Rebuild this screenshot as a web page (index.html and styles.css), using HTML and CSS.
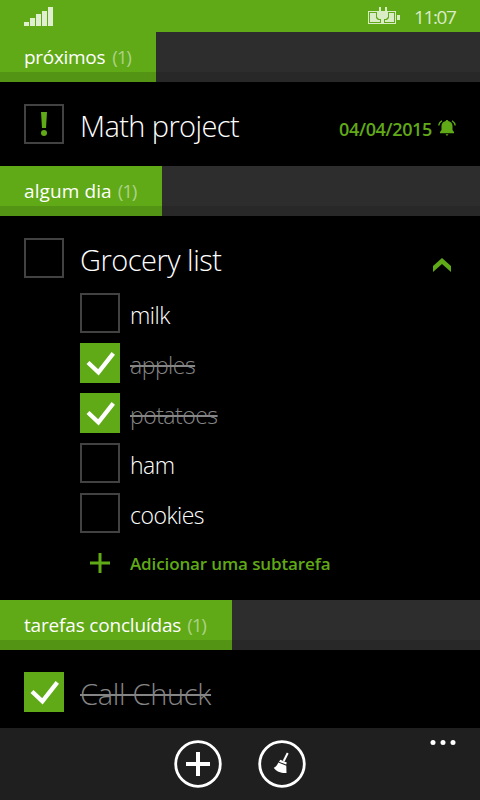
FILE: index.html
```html
<!DOCTYPE html>
<html lang="pt">
<head>
<meta charset="utf-8">
<title>Tarefas</title>
<link rel="stylesheet" href="styles.css">
</head>
<body>
<svg class="defs" aria-hidden="true">
  <symbol id="check" viewBox="0 0 40 40"><path d="M8 19.500 18.400 29.300 33.300 10.300" fill="none" stroke="#fff" stroke-width="4.300"/></symbol>
</svg>
<header class="status">
  <svg class="signal" width="30" height="20" viewBox="0 0 30 20"><path d="M0 15h5v4H0zM6 11h5v8H6zM12 7h5v12h-5zM18 4h5v15h-5zM24 0h5v19h-5z" fill="#dfefcf"/></svg>
  <svg class="battery" width="33" height="18" viewBox="0 0 33 18"><g fill="#d9ecc5"><path d="M0 4h9v1H1v11h12v1H0zM20 4h8v13H16v-1h11V5h-7zM29 8h3v5h-3z"/><path d="M2 6h6v5l2 2h2v2H2zM21 6h5v9h-9v-2h2l2-2zM11 0h2v4h4V0h2v4h1v6l-2 2h-2v5h-3v-5h-2l-2-2V4h2z"/></g></svg>
  <span class="clock">11:07</span>
</header>
<main>
  <section>
    <div class="group"><h2 class="tab upcoming"><span class="name">próximos</span><span class="count">(1)</span></h2></div>
    <div class="task">
      <span class="box"><svg width="36" height="36" viewBox="0 0 36 36"><path d="M15 6h6l-1 16h-4z" fill="#60a917"/><circle cx="18" cy="27" r="3" fill="#60a917"/></svg></span>
      <span class="title math">Math project</span>
      <span class="date">04/04/2015</span>
      <svg class="bell" width="18" height="18" viewBox="0 0 18 18"><path d="M9 1c.8 0 1.200.5 1.300 1.100C13 2.700 14.500 4.500 14.500 7v4l1.500 2v1.300H2V13L3.500 11V7c0-2.500 1.500-4.300 4.200-4.900C7.800 1.500 8.200 1 9 1zM7.500 15.200h3L9 17z" fill="#60a917"/><path d="M4 1.700Q1 3.500.8 6.500M14 1.700Q17 3.500 17.200 6.500" fill="none" stroke="#60a917" stroke-width="1.300"/></svg>
    </div>
  </section>
  <section>
    <div class="group"><h2 class="tab someday"><span class="name">algum dia</span><span class="count">(1)</span></h2></div>
    <div class="list">
      <div class="parent">
        <span class="box"></span>
        <span class="title grocery">Grocery list</span>
        <svg class="chevron" width="18" height="14" viewBox="0 0 18 14"><path d="M9 0 18 8v6L9 6 0 14V8z" fill="#60a917"/></svg>
      </div>
      <ul class="subtasks">
        <li><span class="box"></span><span class="sub milk">milk</span></li>
        <li><span class="box done"><svg width="40" height="40"><use href="#check"/></svg></span><span class="sub struck apples">apples</span></li>
        <li><span class="box done"><svg width="40" height="40"><use href="#check"/></svg></span><span class="sub struck potatoes">potatoes</span></li>
        <li><span class="box"></span><span class="sub ham">ham</span></li>
        <li><span class="box"></span><span class="sub cookies">cookies</span></li>
      </ul>
      <div class="add">
        <svg width="40" height="20" viewBox="0 0 40 20"><path d="M10 10h20M20 0v20" stroke="#60a917" stroke-width="3"/></svg>
        <span class="addlabel">Adicionar uma subtarefa</span>
      </div>
    </div>
  </section>
  <section>
    <div class="group"><h2 class="tab completed"><span class="name">tarefas concluídas</span><span class="count">(1)</span></h2></div>
    <div class="task last">
      <span class="box done"><svg width="40" height="40"><use href="#check"/></svg></span>
      <span class="title struck call">Call Chuck</span>
    </div>
  </section>
</main>
<footer class="appbar">
  <svg width="48" height="48" viewBox="0 0 48 48"><circle cx="24" cy="24" r="22.300" fill="none" stroke="#fff" stroke-width="2.800"/><path d="M12 24h24M24 12v24" stroke="#fff" stroke-width="4"/></svg>
  <svg width="48" height="48" viewBox="0 0 48 48"><circle cx="24" cy="24" r="22.300" fill="none" stroke="#fff" stroke-width="2.800"/><path d="m29.700 13-4 8" stroke="#fff" stroke-width="2"/><path d="m22.300 19.800 6.500 2.800-.6 2-7.200-2.900zM20.300 22.500l8 3.300.2 7.200c-5 .4-10.500-1.500-12.700-5.300 2-.8 3.600-2.500 4.500-5.200z" fill="#fff"/></svg>
  <svg class="more" width="26" height="6" viewBox="0 0 26 6"><g fill="#fff"><circle cx="3" cy="2.500" r="2.500"/><circle cx="13" cy="2.500" r="2.500"/><circle cx="23" cy="2.500" r="2.500"/></g></svg>
</footer>
</body>
</html>
```
FILE: styles.css
```css
* { box-sizing: border-box; }
body { margin: 0; width: 480px; height: 800px; overflow: hidden; background: #000; color: #fff; font-family: "Open Sans", "Noto Sans", sans-serif; display: flex; flex-direction: column; }
svg { display: block; flex: none; }
.defs { position: absolute; width: 0; height: 0; }
.status { height: 32px; background: #60a917; display: flex; align-items: flex-start; padding: 7px 24px 0; }
.battery { margin-left: auto; }
.clock { width: 42px; margin-left: 13px; font-size: 19px; line-height: 20px; font-weight: 400; letter-spacing: -1.400px; color: #daebc8; white-space: nowrap; }
.group { height: 50px; background: linear-gradient(#2d2d2d 40px, #282828 40px); }
.tab { margin: 0; height: 50px; padding: 0 0 0 24px; display: flex; align-items: center; gap: 7px; font-size: 19px; font-weight: 400; line-height: 50px; background: linear-gradient(#60a917 40px, #549415 40px); white-space: nowrap; letter-spacing: -.3px; }
.upcoming { width: 156px; }
.someday { width: 162px; gap: 6px; letter-spacing: .1px; }
.completed { width: 232px; gap: 6px; letter-spacing: -.180px; }
.count { color: #acd285; font-weight: 400; letter-spacing: -1.200px; }
.box { width: 40px; height: 40px; border: 2px solid #424242; flex: none; }
.done { border: 0; background: #60a917; }
.task { height: 84px; padding: 0 24px; display: flex; align-items: center; }
.last { height: 78px; padding-top: 6px; }
.title { margin-left: 16px; padding-top: 3px; font-size: 29px; line-height: 40px; font-weight: 300; letter-spacing: -.6px; white-space: nowrap; }
.grocery { padding-top: 2px; letter-spacing: -.500px; }
.call { letter-spacing: -.300px; text-underline-offset: 0; }
.date { margin-left: auto; padding-top: 9px; font-size: 18px; line-height: 24px; font-weight: 600; color: #60a917; letter-spacing: -.350px; }
.bell { margin: 8px 0 0 6px; }
.list { height: 384px; padding: 22px 24px 0; }
.parent { display: flex; height: 40px; }
.chevron { margin: 20px 5px 0 auto; }
.subtasks { list-style: none; margin: 15px 0 0 56px; padding: 0; display: grid; gap: 10px; }
.subtasks li { display: flex; height: 40px; }
.sub { margin-left: 10px; font-size: 23px; line-height: 44px; font-weight: 300; letter-spacing: -.5px; white-space: nowrap; }
.struck { color: #858585; text-decoration: line-through; text-decoration-thickness: 2px; }
.add { margin: 20px 0 0 56px; display: flex; align-items: center; gap: 10px; height: 20px; color: #60a917; }
.addlabel { padding-top: 2px; font-size: 17px; line-height: 24px; font-weight: 600; letter-spacing: -.120px; white-space: nowrap; }
.appbar { height: 72px; background: #1f1f1f; display: flex; align-items: flex-start; padding: 12px 24px 0 174px; gap: 36px; }
.more { margin-left: auto; }
```
